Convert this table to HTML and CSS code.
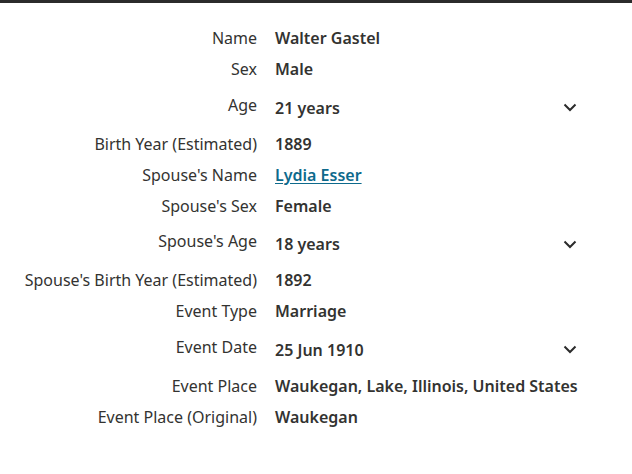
FILE: index.html
```html
<!DOCTYPE html>
<html lang="en">
<head>
<meta charset="utf-8">
<title>Record</title>
<link rel="stylesheet" href="styles.css">
</head>
<body>
<div class="topbar"></div>
<dl class="facts">
  <div class="row"><dt class="label">Name</dt><dd class="value">Walter Gastel</dd></div>
  <div class="row"><dt class="label">Sex</dt><dd class="value">Male</dd></div>
  <div class="row expand"><dt class="label">Age</dt><dd class="value"><span>21 years</span><svg class="chev" viewBox="0 0 14 9" width="14" height="9"><path d="M1.5 1.5 L7 7 L12.5 1.5" fill="none" stroke="#2b2b2b" stroke-width="2"/></svg></dd></div>
  <div class="row"><dt class="label">Birth Year (Estimated)</dt><dd class="value">1889</dd></div>
  <div class="row"><dt class="label">Spouse's Name</dt><dd class="value"><a class="link" href="#">Lydia Esser</a></dd></div>
  <div class="row"><dt class="label">Spouse's Sex</dt><dd class="value">Female</dd></div>
  <div class="row expand"><dt class="label">Spouse's Age</dt><dd class="value"><span>18 years</span><svg class="chev" viewBox="0 0 14 9" width="14" height="9"><path d="M1.5 1.5 L7 7 L12.5 1.5" fill="none" stroke="#2b2b2b" stroke-width="2"/></svg></dd></div>
  <div class="row"><dt class="label">Spouse's Birth Year (Estimated)</dt><dd class="value">1892</dd></div>
  <div class="row"><dt class="label">Event Type</dt><dd class="value">Marriage</dd></div>
  <div class="row expand"><dt class="label">Event Date</dt><dd class="value"><span>25 Jun 1910</span><svg class="chev" viewBox="0 0 14 9" width="14" height="9"><path d="M1.5 1.5 L7 7 L12.5 1.5" fill="none" stroke="#2b2b2b" stroke-width="2"/></svg></dd></div>
  <div class="row"><dt class="label">Event Place</dt><dd class="value">Waukegan, Lake, Illinois, United States</dd></div>
  <div class="row"><dt class="label">Event Place (Original)</dt><dd class="value">Waukegan</dd></div>
</dl>
</body>
</html>
```
FILE: styles.css
```css
html, body {
  margin: 0;
  padding: 0;
  background: #ffffff;
}
body {
  font-family: "Noto Sans", "Open Sans", sans-serif;
  font-size: 16px;
  line-height: 24px;
  color: #333331;
}
.topbar {
  height: 3px;
  background: #2b2b2b;
}
.facts {
  margin: 0;
  padding: 19px 0 0 0;
  display: flex;
  flex-direction: column;
}
.row {
  display: grid;
  grid-template-columns: 257px 310px;
  column-gap: 18px;
  align-items: start;
}
.label {
  text-align: right;
  padding: 4px 0 3px;
  color: #333331;
}
.value {
  margin: 0;
  padding: 4px 0 3px;
  font-weight: 600;
  color: #333331;
  white-space: nowrap;
  display: flex;
  justify-content: space-between;
  align-items: center;
}
.expand .label {
  padding-top: 8.5px;
}
.expand .value {
  padding: 11.5px 0 8px;
}
.chev {
  margin-right: 8px;
}
.link {
  color: #0e6a8c;
  text-decoration: underline;
  text-underline-offset: 2px;
}
```
